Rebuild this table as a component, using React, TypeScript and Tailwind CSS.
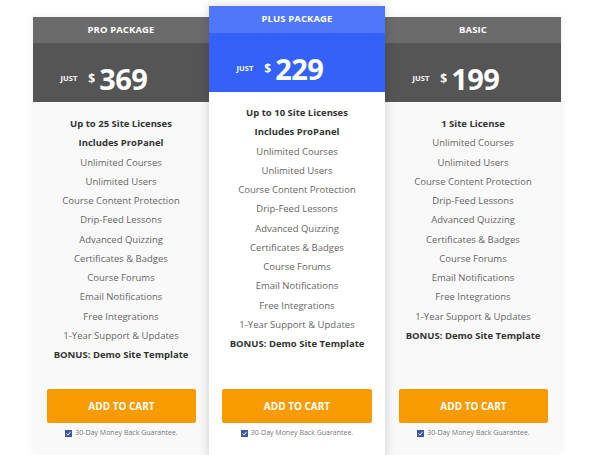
import React from "react";

const features = [
  "Unlimited Courses",
  "Unlimited Users",
  "Course Content Protection",
  "Drip-Feed Lessons",
  "Advanced Quizzing",
  "Certificates & Badges",
  "Course Forums",
  "Email Notifications",
  "Free Integrations",
  "1-Year Support & Updates",
];

type Plan = {
  title: string;
  price: string;
  top: string[];
  featured?: boolean;
};

const plans: Plan[] = [
  { title: "PRO PACKAGE", price: "369", top: ["Up to 25 Site Licenses", "Includes ProPanel"] },
  { title: "PLUS PACKAGE", price: "229", top: ["Up to 10 Site Licenses", "Includes ProPanel"], featured: true },
  { title: "BASIC", price: "199", top: ["1 Site License"] },
];

function Check() {
  return (
    <svg width="7" height="7" viewBox="0 0 7 7" className="shrink-0">
      <rect x="0" y="0" width="7" height="7" fill="#3c5a9a" />
      <path d="M1.5 3.6 L3 5.1 L5.6 1.8" stroke="#fff" strokeWidth="0.9" fill="none" />
    </svg>
  );
}

function Card({ plan }: { plan: Plan }) {
  const f = !!plan.featured;
  const boldCount = plan.top.length;
  const list = [...plan.top, ...features];
  return (
    <div
      className={
        f
          ? "relative z-10 w-[176px] shrink-0 mt-[6px] h-[457px] pb-[25px] flex flex-col bg-white shadow-[0_0_10px_rgba(0,0,0,0.18)]"
          : "relative w-[176px] shrink-0 mt-[17px] h-[435px] pb-[14px] flex flex-col bg-[#f9f9f9] shadow-[0_0_8px_rgba(0,0,0,0.07)]"
      }
    >
      <div
        className={
          (f ? "bg-[#5077f7] h-[27px]" : "bg-[#6b6b6b] h-[26px]") +
          " flex items-center justify-center text-white font-bold text-[9.5px] tracking-[0.1px]"
        }
      >
        {plan.title}
      </div>
      <div
        className={
          (f ? "bg-[#3461f7]" : "bg-[#555555]") +
          " h-[59px] flex items-center justify-center pr-[34px] pt-[12px] text-white font-bold leading-none"
        }
      >
        <span className="text-[7.5px]">JUST</span>
        <span className="text-[12px] ml-[11px]">$</span>
        <span className="text-[29px] ml-[4px] tracking-[-0.5px]">{plan.price}</span>
      </div>
      <div className={(f ? "pt-[11px]" : "pt-[12px]") + " flex flex-col items-center px-[10px]"}>
        {list.map((t, i) => (
          <div
            key={i}
            className={
              "leading-[19.25px] text-[9.5px] whitespace-nowrap " +
              (i < boldCount ? "font-bold text-[#333333]" : "text-[#666666]")
            }
          >
            {t}
          </div>
        ))}
        <div className="leading-[19.25px] text-[9.5px] font-bold text-[#333333] whitespace-nowrap">
          BONUS: Demo Site Template
        </div>
      </div>
      <div
        className={
          (f ? "px-[13px]" : "pl-[14px] pr-[13px]") + " mt-auto flex flex-col items-center"
        }
      >
        <div className="w-full h-[34px] bg-[#f89b00] rounded-[2px] flex items-center justify-center text-white font-bold text-[10px]">
          ADD TO CART
        </div>
        <div className="mt-[5px] flex items-center gap-[3px] text-[7px] leading-[10px] text-[#777777]">
          <Check />
          <span>30-Day Money Back Guarantee.</span>
        </div>
      </div>
    </div>
  );
}

export default function App() {
  return (
    <div
      className="w-[614px] h-[455px] overflow-hidden bg-white flex items-start pl-[33px]"
      style={{ fontFamily: '"Open Sans", "Liberation Sans", sans-serif' }}
    >
      {plans.map((p) => (
        <Card key={p.title} plan={p} />
      ))}
    </div>
  );
}
